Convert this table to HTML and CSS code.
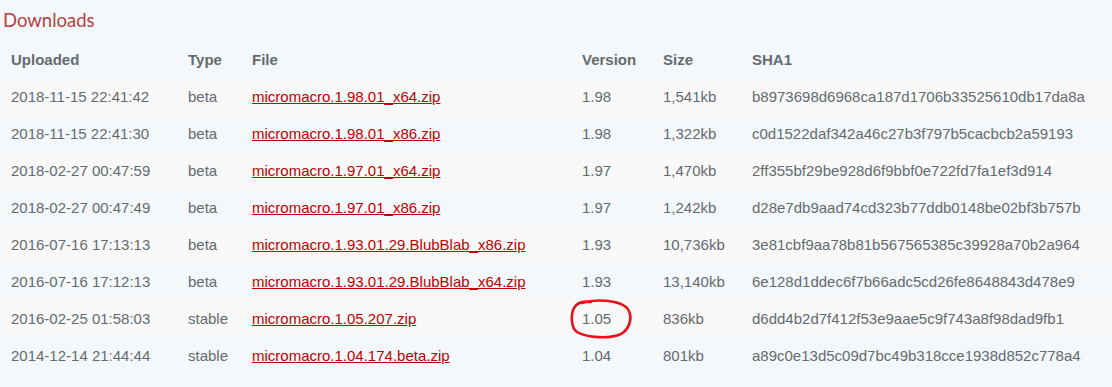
FILE: index.html
```html
<!DOCTYPE html>
<html lang="en">
<head>
<meta charset="utf-8">
<title>Downloads</title>
<link rel="stylesheet" href="styles.css">
</head>
<body>
<div class="page">
  <h2 class="title">Downloads</h2>
  <table class="downloads">
    <colgroup>
      <col class="c-up"><col class="c-type"><col class="c-file"><col class="c-ver"><col class="c-size"><col class="c-sha">
    </colgroup>
    <thead>
      <tr><th>Uploaded</th><th>Type</th><th>File</th><th>Version</th><th>Size</th><th>SHA1</th></tr>
    </thead>
    <tbody>
      <tr><td>2018-11-15 22:41:42</td><td>beta</td><td><a href="#">micromacro.1.98.01_x64.zip</a></td><td>1.98</td><td>1,541kb</td><td>b8973698d6968ca187d1706b33525610db17da8a</td></tr>
      <tr><td>2018-11-15 22:41:30</td><td>beta</td><td><a href="#">micromacro.1.98.01_x86.zip</a></td><td>1.98</td><td>1,322kb</td><td>c0d1522daf342a46c27b3f797b5cacbcb2a59193</td></tr>
      <tr><td>2018-02-27 00:47:59</td><td>beta</td><td><a href="#">micromacro.1.97.01_x64.zip</a></td><td>1.97</td><td>1,470kb</td><td>2ff355bf29be928d6f9bbf0e722fd7fa1ef3d914</td></tr>
      <tr><td>2018-02-27 00:47:49</td><td>beta</td><td><a href="#">micromacro.1.97.01_x86.zip</a></td><td>1.97</td><td>1,242kb</td><td>d28e7db9aad74cd323b77ddb0148be02bf3b757b</td></tr>
      <tr><td>2016-07-16 17:13:13</td><td>beta</td><td><a href="#">micromacro.1.93.01.29.BlubBlab_x86.zip</a></td><td>1.93</td><td>10,736kb</td><td>3e81cbf9aa78b81b567565385c39928a70b2a964</td></tr>
      <tr><td>2016-07-16 17:12:13</td><td>beta</td><td><a href="#">micromacro.1.93.01.29.BlubBlab_x64.zip</a></td><td>1.93</td><td>13,140kb</td><td>6e128d1ddec6f7b66adc5cd26fe8648843d478e9</td></tr>
      <tr><td>2016-02-25 01:58:03</td><td>stable</td><td><a href="#">micromacro.1.05.207.zip</a></td><td class="marked">1.05<svg class="circle" viewBox="0 0 62 40" width="62" height="40" aria-hidden="true"><path d="M12 4 C25 -0.5 49 1 57 9 C63 16 61 29 51 35 C39 40.5 16 38.5 7 33 C1 29 0.5 16 4 9 C7 3.5 14 2 21 3" fill="none" stroke="#e8101a" stroke-width="2.6" stroke-linecap="round"/></svg></td><td>836kb</td><td>d6dd4b2d7f412f53e9aae5c9f743a8f98dad9fb1</td></tr>
      <tr><td>2014-12-14 21:44:44</td><td>stable</td><td><a href="#">micromacro.1.04.174.beta.zip</a></td><td>1.04</td><td>801kb</td><td>a89c0e13d5c09d7bc49b318cce1938d852c778a4</td></tr>
    </tbody>
  </table>
</div>
</body>
</html>
```

FILE: styles.css
```css
html, body {
  margin: 0;
  padding: 0;
  background: #f5f8fa;
}

.page {
  padding: 0 0 0 3px;
  font-family: "Liberation Sans", Arial, sans-serif;
  color: #636b6f;
}

.title {
  margin: 0;
  padding-top: 9px;
  height: 41px;
  box-sizing: border-box;
  font-family: Lato, "Open Sans", sans-serif;
  font-weight: 400;
  font-size: 18.5px;
  line-height: 22px;
  color: #b3423f;
}

.downloads {
  width: 100%;
  border-collapse: collapse;
  table-layout: fixed;
  font-size: 15px;
  line-height: 21px;
}

.c-up { width: 177px; }
.c-type { width: 64px; }
.c-file { width: 330px; }
.c-ver { width: 81px; }
.c-size { width: 89px; }

.downloads th,
.downloads td {
  padding: 8px;
  text-align: left;
  white-space: nowrap;
  vertical-align: top;
}

.downloads th {
  font-weight: 700;
}

.downloads tbody tr:nth-child(odd) {
  background: #f9f9f9;
}

.downloads a {
  color: #c00000;
  text-decoration: underline;
}

.marked {
  position: relative;
}

.circle {
  position: absolute;
  left: -4px;
  top: -1px;
  overflow: visible;
}
```
